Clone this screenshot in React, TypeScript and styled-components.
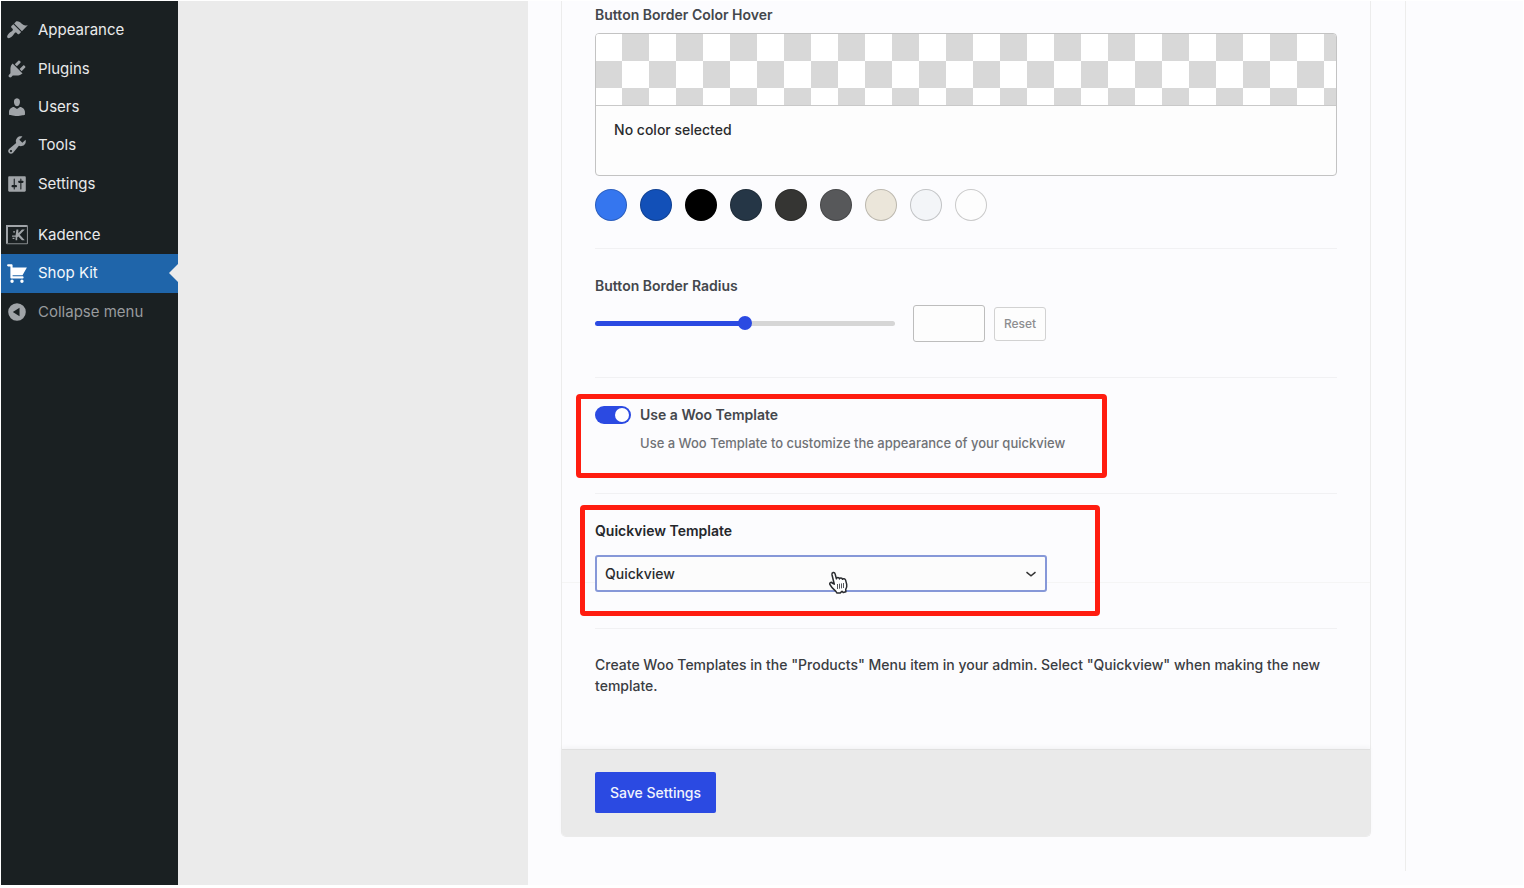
import React from "react";
import styled, { createGlobalStyle } from "styled-components";

const GlobalStyle = createGlobalStyle`
  *, *::before, *::after { box-sizing: border-box; }
  body {
    margin: 0;
    background: #fff;
    color: #3a3d42;
    font-family: Inter, "Liberation Sans", sans-serif;
    font-size: 14px;
    line-height: 20px;
  }
  button, input, select { font: inherit; }
`;

const Shell = styled.div`
  display: flex;
  min-height: calc(100vh - 4px);
  margin: 1px 1px 3px;
`;

const Sidebar = styled.nav`
  display: flex;
  flex: 0 0 177px;
  flex-direction: column;
  gap: 13px;
  padding-top: 10px;
  background: #1a2022;
`;

const MenuGroup = styled.ul<{ $height: number }>`
  display: flex;
  flex-direction: column;
  height: ${(p) => p.$height}px;
  margin: 0;
  padding: 0;
  list-style: none;
`;

const MenuItem = styled.li`
  display: flex;
  flex: 1;
`;

const MenuLink = styled.a<{ $active?: boolean; $muted?: boolean }>`
  position: relative;
  display: flex;
  flex: 1;
  align-items: center;
  gap: 10px;
  padding-left: 5px;
  background: ${(p) => (p.$active ? "#1f65aa" : "transparent")};
  color: ${(p) => (p.$active ? "#f4f8fc" : p.$muted ? "#989b9e" : "#e9eaeb")};
  font-size: 15px;
  text-decoration: none;

  svg {
    width: 22px;
    height: 22px;
    fill: ${(p) => (p.$active ? "#fff" : "#a0a4a8")};
  }

  &::after {
    content: "";
    position: absolute;
    top: 50%;
    right: 0;
    display: ${(p) => (p.$active ? "block" : "none")};
    margin-top: -9px;
    border: 9px solid transparent;
    border-left-width: 0;
    border-right-color: #ebebeb;
  }
`;

const Gutter = styled.div`
  flex: 0 0 23%;
  background: #ebebeb;
`;

const Main = styled.main`
  display: flex;
  flex: 1;
  align-items: flex-start;
  min-width: 0;
  background: #fcfcfe;
`;

const Column = styled.div`
  flex: 1;
  min-width: 0;
  padding: 0 34px 0 33px;
`;

const Aside = styled.aside`
  flex: 0 0 118px;
  height: calc(100vh - 18px);
  border-left: 1px solid #ededec;
`;

const Card = styled.form`
  display: flex;
  flex-direction: column;
  border: 1px solid #ececec;
  border-top: 0;
  border-radius: 0 0 5px 5px;
`;

const Fields = styled.div`
  display: flex;
  flex-direction: column;
  padding: 0 33px 53px;
  background: linear-gradient(#f5f5f5, #f5f5f5) 0 581px / 100% 1px no-repeat;
`;

const Field = styled.section<{ $top: number; $bottom: number }>`
  position: relative;
  padding: ${(p) => p.$top}px 0 ${(p) => p.$bottom}px;
  border-bottom: 1px solid #f1f1f3;
`;

const Title = styled.label<{ $dark?: boolean }>`
  display: block;
  color: ${(p) => (p.$dark ? "#25272b" : "#44474c")};
  font-weight: 600;
`;

const Picker = styled.button`
  display: block;
  width: 100%;
  height: 143px;
  margin-top: 8px;
  padding: 0;
  overflow: hidden;
  border: 1px solid #c3c3c3;
  border-radius: 4px;
  background: #fdfdfd;
  color: #2b2c2e;
  font-weight: 500;
  text-align: left;
`;

const Checker = styled.span`
  display: block;
  height: 72px;
  border-bottom: 1px solid #c9c9c9;
  background: repeating-conic-gradient(#d8d8d8 0 25%, #fff 0 50%) -1px 0 / 54px 54px;
`;

const PickerText = styled.span`
  display: block;
  height: 69px;
  padding: 14px 18px;
`;

const Swatches = styled.div`
  display: flex;
  flex-wrap: wrap;
  gap: 13px;
  margin-top: 13px;
`;

const Swatch = styled.button<{ $color: string }>`
  width: 32px;
  height: 32px;
  padding: 0;
  border: 1px solid rgba(0, 0, 0, 0.2);
  border-radius: 50%;
  background: ${(p) => p.$color};
`;

const Controls = styled.div`
  display: flex;
  align-items: center;
  margin-top: 9px;
`;

const Slider = styled.input`
  width: 300px;
  height: 14px;
  margin: 0 18px 0 0;
  appearance: none;
  background: transparent;

  &::-webkit-slider-runnable-track {
    height: 5px;
    border-radius: 3px;
    background: linear-gradient(to right, #2b4ae2 50%, #d6d6d6 50%);
  }
  &::-webkit-slider-thumb {
    width: 14px;
    height: 14px;
    margin-top: -5px;
    appearance: none;
    border-radius: 50%;
    background: #2b4ae2;
  }
`;

const NumberBox = styled.input`
  width: 72px;
  height: 37px;
  margin-right: 9px;
  border: 1px solid #bdbdbd;
  border-radius: 3px;
  background: #fdfdfd;
`;

const ResetButton = styled.button`
  width: 52px;
  height: 34px;
  padding: 0;
  border: 1px solid #d2d2d2;
  border-radius: 3px;
  background: #fdfdfd;
  color: #8d8e90;
  font-size: 12px;
  font-weight: 500;
`;

const ToggleRow = styled.div`
  display: flex;
  align-items: center;
  gap: 9px;
`;

const Toggle = styled.input`
  display: flex;
  align-items: center;
  width: 36px;
  height: 18px;
  margin: 0;
  padding: 0 2px;
  appearance: none;
  border-radius: 9px;
  background: #c4c4c4;

  &::after {
    content: "";
    width: 14px;
    height: 14px;
    border-radius: 50%;
    background: #fff;
  }
  &:checked {
    justify-content: flex-end;
    background: #2b4ae2;
  }
`;

const Help = styled.p`
  margin: 8px 0 0 45px;
  color: #707276;
  font-size: 13px;
  font-weight: 500;
`;

const SelectWrap = styled.div`
  position: relative;
  max-width: 452px;
  margin-top: 14px;
`;

const Select = styled.select`
  display: block;
  width: 100%;
  height: 37px;
  padding: 0 8px;
  appearance: none;
  border: 2px solid #8698d8;
  border-radius: 3px;
  background: #fcfcfc;
  color: #2b2c2e;
  font-weight: 500;
`;

const Chevron = styled.svg`
  position: absolute;
  top: 13px;
  right: 10px;
  width: 12px;
  height: 12px;
  pointer-events: none;
`;

const Pointer = styled.svg`
  position: absolute;
  top: 16px;
  left: 233px;
  width: 20px;
  height: 23px;
  pointer-events: none;
`;

const Highlight = styled.div<{ $top: number; $left: number; $width: number; $height: number }>`
  position: absolute;
  top: ${(p) => p.$top}px;
  left: ${(p) => p.$left}px;
  width: ${(p) => p.$width}px;
  height: ${(p) => p.$height}px;
  border: 5px solid #ff1d10;
  border-radius: 4px;
  pointer-events: none;
`;

const Note = styled.p`
  margin: 25px 0 0;
  font-weight: 500;
  line-height: 21px;
`;

const Footer = styled.footer`
  padding: 22px 33px 23px;
  border-top: 1px solid #e0e0e0;
  border-radius: 0 0 4px 4px;
  background: #eaeaea;
  box-shadow: 0 -2px 5px rgba(0, 0, 0, 0.04);
`;

const SaveButton = styled.button`
  display: block;
  width: 121px;
  height: 41px;
  padding: 0;
  border: 0;
  border-radius: 2px;
  background: #2b4ae2;
  color: #f1f3fd;
  font-weight: 500;
`;

const icons: Record<string, React.ReactNode> = {
  appearance: (
    <path d="M14.48 11.06L7.41 3.99l1.5-1.5c.5-.56 2.3-.47 3.51.32 1.21.8 1.43 1.28 2.91 2.1 1.18.64 2.45 1.26 4.45.85zm-.71.71L6.7 4.7 4.93 6.47c-.39.39-.39 1.02 0 1.41l1.06 1.06c.39.39.39 1.03 0 1.42-.6.6-1.43 1.11-2.21 1.69-.35.26-.7.53-1.01.84C1.43 14.23.4 16.08 1.4 17.07c.99 1 2.84-.03 4.18-1.36.31-.31.58-.66.85-1.02.57-.78 1.08-1.61 1.69-2.21.39-.39 1.02-.39 1.41 0l1.06 1.06c.39.39 1.02.39 1.41 0z" />
  ),
  plugins: (
    <path d="M13.11 4.36L9.87 7.6 8 5.73l3.24-3.24c.35-.34 1.05-.2 1.56.32.52.51.66 1.21.31 1.55zm-8 1.77l.91-1.12 9.01 9.01-1.19.84c-.71.71-2.63 1.16-3.82 1.16H6.14L4.9 17.26c-.59.59-1.54.59-2.12 0-.59-.58-.59-1.53 0-2.12l1.24-1.24v-3.88c0-1.13.4-3.19 1.09-3.89zm7.26 3.97l3.24-3.24c.34-.35 1.04-.21 1.55.31.52.51.66 1.21.31 1.55l-3.24 3.25z" />
  ),
  users: (
    <path d="M10 9.25c-2.27 0-2.73-3.44-2.73-3.44C7 4.02 7.82 2 9.97 2c2.16 0 2.98 2.02 2.71 3.81 0 0-.41 3.44-2.68 3.44zm0 2.57L12.72 10c2.39 0 4.52 2.33 4.52 4.53v2.49s-3.65 1.13-7.24 1.13c-3.65 0-7.24-1.13-7.24-1.13v-2.49c0-2.25 1.94-4.48 4.47-4.48z" />
  ),
  tools: (
    <path d="M16.68 9.77c-1.34 1.34-3.3 1.67-4.95.99l-5.41 6.52c-.99.99-2.59.99-3.58 0s-.99-2.59 0-3.57l6.52-5.42c-.68-1.65-.35-3.61.99-4.95 1.28-1.28 3.12-1.62 4.72-1.06l-2.89 2.89 2.82 2.82 2.86-2.87c.53 1.58.18 3.39-1.08 4.65zM3.81 16.21c.4.39 1.04.39 1.43 0 .4-.4.4-1.04 0-1.43-.39-.4-1.03-.4-1.43 0-.39.39-.39 1.03 0 1.43z" />
  ),
  settings: (
    <path d="M18 16V4c0-.55-.45-1-1-1H3c-.55 0-1 .45-1 1v12c0 .55.45 1 1 1h14c.55 0 1-.45 1-1zM8 11h1c.55 0 1 .45 1 1s-.45 1-1 1H8v1.5c0 .28-.22.5-.5.5s-.5-.22-.5-.5V13H6c-.55 0-1-.45-1-1s.45-1 1-1h1V5.5c0-.28.22-.5.5-.5s.5.22.5.5V11zm5-2h-1c-.55 0-1-.45-1-1s.45-1 1-1h1V5.5c0-.28.22-.5.5-.5s.5.22.5.5V7h1c.55 0 1 .45 1 1s-.45 1-1 1h-1v5.5c0 .28-.22.5-.5.5s-.5-.22-.5-.5V9z" />
  ),
  kadence: (
    <>
      <path
        d="M1 1.500H19a.5.5 0 0 1 .5.5V17.500a.5.5 0 0 1-.5.5H1a.5.5 0 0 1-.5-.5z"
        fill="none"
        stroke="#85898c"
      />
      <path d="M.9 17.500V1.900H19" fill="none" stroke="#a0a4a8" strokeWidth="1.800" />
      <path d="M9.500 5h1.700v3.400l3.300-3.400h2.600l-4.600 4.800 4.600 4.900h-2.600l-3.300-3.400-1 1v2.400H8.700v-3H5.500v-1.300h3.200zM6.500 6.500h1.700v1.200H6.500zM6 12.500h1.700v1.200H6z" />
    </>
  ),
  cart: (
    <path d="M6 13h9c.55 0 1 .45 1 1s-.45 1-1 1H5c-.55 0-1-.45-1-1V4H2c-.55 0-1-.45-1-1s.45-1 1-1h3c.55 0 1 .45 1 1v2h13l-4 7H6v1zm-.5 3c.83 0 1.5.67 1.5 1.5S6.33 19 5.5 19 4 18.330 4 17.5 4.670 16 5.5 16zm9 0c.83 0 1.5.67 1.5 1.5s-.67 1.5-1.5 1.5-1.5-.67-1.5-1.5.67-1.5 1.5-1.5z" />
  ),
  collapse: (
    <path
      fillRule="evenodd"
      d="M10 2a8 8 0 1 1 0 16 8 8 0 0 1 0-16zm2.300 4.200L6.200 10l6.100 3.800z"
    />
  ),
};

type Entry = { label: string; icon: string; active?: boolean; muted?: boolean };

const coreMenu: Entry[] = [
  { label: "Appearance", icon: "appearance" },
  { label: "Plugins", icon: "plugins" },
  { label: "Users", icon: "users" },
  { label: "Tools", icon: "tools" },
  { label: "Settings", icon: "settings" },
];

const pluginMenu: Entry[] = [
  { label: "Kadence", icon: "kadence" },
  { label: "Shop Kit", icon: "cart", active: true },
  { label: "Collapse menu", icon: "collapse", muted: true },
];

const palette = [
  "#3576ef", "#1250b8", "#000000", "#253646", "#353533",
  "#57585a", "#ebe6da", "#f3f5f8", "#fdfdfd",
];

function Menu({ entries, height }: { entries: Entry[]; height: number }) {
  return (
    <MenuGroup $height={height}>
      {entries.map((e) => (
        <MenuItem key={e.label}>
          <MenuLink href="#" $active={e.active} $muted={e.muted}>
            <svg viewBox="0 0 20 20" aria-hidden="true">{icons[e.icon]}</svg>
            {e.label}
          </MenuLink>
        </MenuItem>
      ))}
    </MenuGroup>
  );
}

export default function App() {
  return (
    <>
      <GlobalStyle />
      <Shell>
        <Sidebar>
          <Menu entries={coreMenu} height={192} />
          <Menu entries={pluginMenu} height={115} />
        </Sidebar>
        <Gutter />
        <Main>
          <Column>
            <Card onSubmit={(e) => e.preventDefault()}>
              <Fields>
                <Field $top={4} $bottom={27}>
                  <Title htmlFor="hover-color">Button Border Color Hover</Title>
                  <Picker id="hover-color" type="button">
                    <Checker />
                    <PickerText>No color selected</PickerText>
                  </Picker>
                  <Swatches>
                    {palette.map((c) => (
                      <Swatch key={c} type="button" $color={c} aria-label={c} />
                    ))}
                  </Swatches>
                </Field>

                <Field $top={27} $bottom={35}>
                  <Title htmlFor="radius">Button Border Radius</Title>
                  <Controls>
                    <Slider id="radius" type="range" defaultValue={50} />
                    <NumberBox type="text" aria-label="Radius value" />
                    <ResetButton type="button">Reset</ResetButton>
                  </Controls>
                </Field>

                <Field $top={27} $bottom={40}>
                  <ToggleRow>
                    <Toggle id="use-template" type="checkbox" defaultChecked />
                    <Title htmlFor="use-template">Use a Woo Template</Title>
                  </ToggleRow>
                  <Help>Use a Woo Template to customize the appearance of your quickview</Help>
                  <Highlight $top={16} $left={-19} $width={531} $height={84} />
                </Field>

                <Field $top={27} $bottom={36}>
                  <Title htmlFor="template" $dark>Quickview Template</Title>
                  <SelectWrap>
                    <Select id="template" defaultValue="Quickview">
                      <option>Quickview</option>
                    </Select>
                    <Chevron viewBox="0 0 12 12" fill="none" stroke="#333" strokeWidth="1.500">
                      <path d="M1.500 4.200 6 7.800l4.500-3.600" />
                    </Chevron>
                    <Pointer viewBox="0 0 20 23" fill="#fff" stroke="#2a2c30" strokeWidth="1.500" strokeLinejoin="round">
                      <path d="M6.300 13.200 4 3.700C3.500 1.300 6.500.6 7.100 2.900l1.300 4.900c.2-1.600 2.700-1.700 3.100.1.400-1.300 2.600-1.200 3 .4.600-1 2.700-.7 3.100.8l1.100 4.300c.4 1.800-.2 3.500-1 4.900l.2 2.500-2.700.7-1.200-1.300-2 1.900H9l-1.300-1.900c-1.800-1.600-4.200-3.500-5.700-6.500-1.100-2 1.300-3.200 2.600-1.400z" />
                      <path d="M9.500 13v5M11.500 12.700v5M13.500 12.400v5M15.500 12v5" strokeWidth="1" stroke="#55575b" />
                    </Pointer>
                  </SelectWrap>
                  <Highlight $top={11} $left={-15} $width={520} $height={111} />
                </Field>

                <Note>
                  Create Woo Templates in the "Products" Menu item in your admin. Select "Quickview"
                  when making the new template.
                </Note>
              </Fields>
              <Footer>
                <SaveButton type="submit">Save Settings</SaveButton>
              </Footer>
            </Card>
          </Column>
          <Aside />
        </Main>
      </Shell>
    </>
  );
}
